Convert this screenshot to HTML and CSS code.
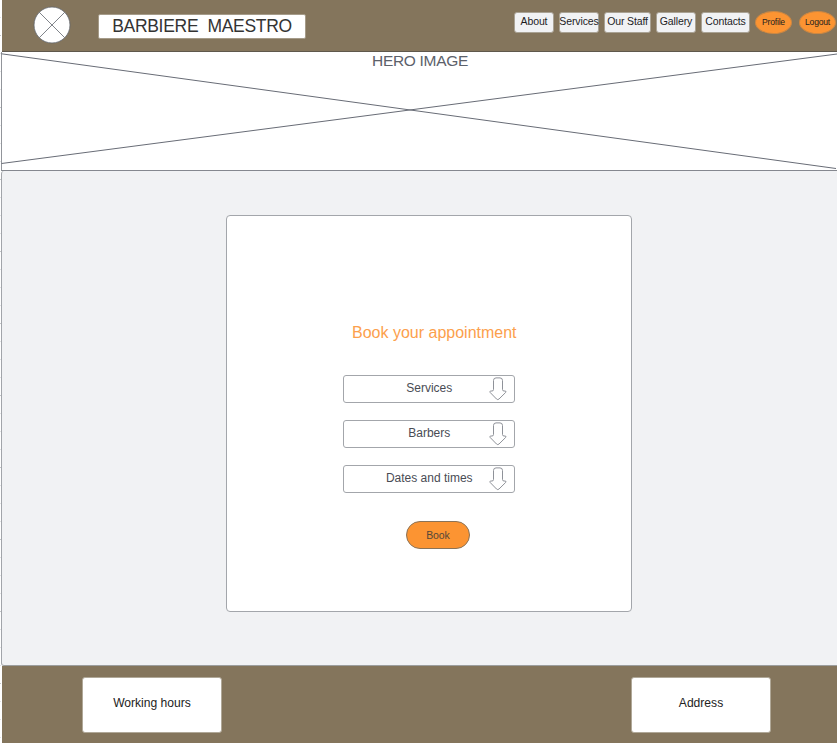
FILE: index.html
```html
<!DOCTYPE html>
<html lang="en">
<head>
<meta charset="utf-8">
<title>Barbiere Maestro</title>
<link rel="stylesheet" href="styles.css">
</head>
<body>
<div class="page">
  <div class="ruler"></div>
  <div class="site">
    <header class="header">
      <svg class="logo" viewBox="0 0 38 38"><circle cx="19" cy="19" r="18"/><path d="M6.3 6.3 31.7 31.7M31.7 6.3 6.3 31.7"/></svg>
      <h1 class="brand">BARBIERE&nbsp; MAESTRO</h1>
      <nav class="nav">
        <a class="link about">About</a>
        <a class="link services">Services</a>
        <a class="link staff">Our Staff</a>
        <a class="link gallery">Gallery</a>
        <a class="link contacts">Contacts</a>
        <a class="pill">Profile</a>
        <a class="pill logout">Logout</a>
      </nav>
    </header>
    <section class="hero">
      <svg class="cross" viewBox="0 0 836 119"><path d="M.5 1.8 835 116.5M.5 111.5 836 2"/></svg>
      <span class="hero-title">HERO IMAGE</span>
    </section>
    <main class="main">
      <form class="card">
        <h2 class="card-title">Book your appointment</h2>
        <div class="select"><span>Services</span><svg class="arrow" viewBox="0 0 18 24"><path d="M4.5 3.5Q4.5.9 7 .9H11Q13.500.9 13.500 3.500V12.500Q13.500 14 15 14H16Q17.800 14.200 16.600 15.500L10 22Q8.800 23.300 7.500 22L1.200 15.500Q.2 14.200 1.800 14H3Q4.500 14 4.500 12.500Z"/></svg></div>
        <div class="select"><span>Barbers</span><svg class="arrow" viewBox="0 0 18 24"><path d="M4.500 3.500Q4.500.9 7 .9H11Q13.500.9 13.500 3.500V12.500Q13.500 14 15 14H16Q17.800 14.200 16.600 15.500L10 22Q8.800 23.300 7.500 22L1.200 15.500Q.2 14.200 1.800 14H3Q4.500 14 4.500 12.500Z"/></svg></div>
        <div class="select"><span>Dates and times</span><svg class="arrow" viewBox="0 0 18 24"><path d="M4.500 3.500Q4.500.9 7 .9H11Q13.500.9 13.500 3.500V12.500Q13.500 14 15 14H16Q17.800 14.200 16.600 15.500L10 22Q8.800 23.300 7.500 22L1.200 15.500Q.2 14.200 1.800 14H3Q4.500 14 4.500 12.500Z"/></svg></div>
        <div class="book">Book</div>
      </form>
    </main>
    <footer class="footer">
      <div class="info">Working hours</div>
      <div class="info">Address</div>
    </footer>
  </div>
</div>
</body>
</html>
```
FILE: styles.css
```css
* { box-sizing: border-box; }
body { margin: 0; background: #fff; font-family: "Liberation Sans", Arial, sans-serif; overflow: hidden; }
.page { display: flex; width: 837px; height: 743px; }
.ruler {
  width: 1px; flex: none;
  background:
    repeating-linear-gradient(to bottom, transparent 0 35px, #c4c6c9 35px 36px, transparent 36px 72px),
    repeating-linear-gradient(to bottom, transparent 0 17px, #e3e4e6 17px 18px);
}
.site { width: 836px; flex: none; }
.header {
  display: flex; align-items: flex-start; height: 52px; margin-left: 1px;
  background: #84755c; border-bottom: 1px solid #5f584c;
}
.logo { width: 38px; height: 38px; margin: 6px 0 0 31px; fill: #fff; stroke: #5f646c; stroke-width: .8; }
.brand {
  width: 208px; height: 25px; margin: 14px 0 0 27px; background: #fff;
  border: 1px solid #a59b89; border-radius: 2px;
  font-size: 17.500px; letter-spacing: -.3px; font-weight: 400; line-height: 23px; text-align: center; color: #333;
}
.nav { display: flex; margin: 11px 0 0 208px; color: #1c1c1e; }
.link {
  height: 21px; margin: 1px 5px 0 0; flex: none; background: #f1f2f4;
  border: 1px solid #a9a294; border-radius: 3px;
  font-size: 10.500px; letter-spacing: -.12px; line-height: 17px; display: flex; justify-content: center; white-space: nowrap;
}
.about, .services, .gallery { width: 40px; }
.staff { width: 47px; }
.contacts { width: 49px; }
.pill {
  flex: none; width: 37px; height: 23px; border-radius: 50%; background: #fc9432;
  border: 1px solid #cb8743; font-size: 8.600px; letter-spacing: -.22px; line-height: 21px; text-align: center;
}
.logout { margin-left: 7px; }
.hero {
  display: grid; justify-items: center; height: 119px;
  border-left: 1px solid #92959b; border-bottom: 1px solid #85888f;
}
.cross { grid-area: 1 / 1; width: 836px; height: 119px; justify-self: start; margin-left: -1px; fill: none; stroke: #686c76; stroke-width: 1; }
.hero-title { grid-area: 1 / 1; font-size: 15.500px; letter-spacing: -.32px; line-height: 18px; color: #5c616a; margin-left: 1px; }
.main {
  height: 495px; padding: 44px 0 0 224px; background: #f1f2f4;
  border-left: 1px solid #a2a5aa; border-bottom: 1px solid #9c9e9e; border-radius: 3px 0 0 3px;
}
.card {
  width: 406px; height: 397px; background: #fff; border: 1px solid #a3a6ab; border-radius: 4px;
  display: flex; flex-direction: column; padding: 107px 0 0 116px;
}
.card-title {
  height: 20px; margin: 0 0 32px 9px; font-size: 16px; font-weight: 400;
  line-height: 20px; color: #fca04c; white-space: nowrap;
}
.select {
  width: 172px; height: 28px; margin-bottom: 17px; padding-right: 7.500px;
  border: 1px solid #a3a6ab; border-radius: 3px; display: flex; flex: none;
  font-size: 12px; line-height: 24px; color: #494c54;
}
.select span { flex: 1; text-align: center; padding-left: 26px; }
.arrow { width: 18px; height: 24px; margin-top: 1px; fill: #fff; stroke: #8f9299; stroke-width: 1; }
.book {
  width: 64px; height: 28px; margin: 11px 0 0 63px; border: 1px solid #8b7357; border-radius: 14px;
  background: #fc9432; color: #554739; font-size: 10.500px; letter-spacing: -.1px; line-height: 26px; text-align: center;
}
.footer {
  display: flex; justify-content: space-between; height: 77px; margin-left: 1px;
  padding: 11px 66px 0 80px; background: #84755c;
}
.info {
  width: 140px; height: 56px; border: 1px solid #b0a898; border-radius: 3px; background: #fff;
  font-size: 12.100px; line-height: 50px; text-align: center; color: #222;
}
```
